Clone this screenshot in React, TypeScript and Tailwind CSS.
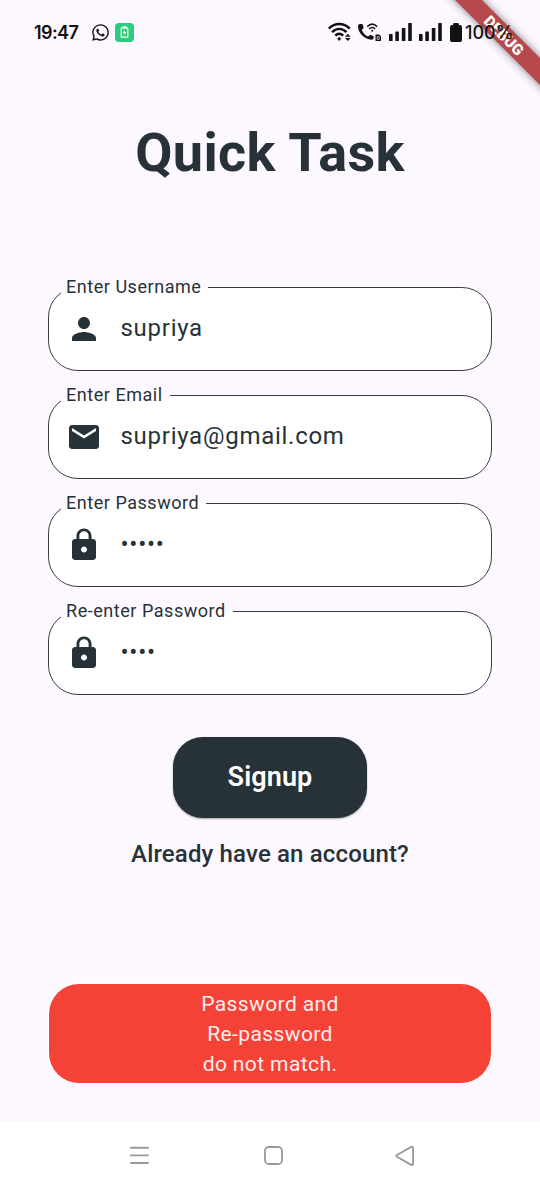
import type { IconType } from "react-icons";
import { FaWhatsapp } from "react-icons/fa";
import { MdEmail, MdLock, MdPerson } from "react-icons/md";

function Signal() {
  return (
    <svg width="23" height="18" viewBox="0 0 23 18" fill="#111">
      <rect x="0" y="11" width="3.6" height="7" rx="0.6" />
      <rect x="6.3" y="8.5" width="3.6" height="9.5" rx="0.6" />
      <rect x="12.8" y="5" width="3.6" height="13" rx="0.6" />
      <rect x="19.2" y="0" width="3.6" height="18" rx="0.6" />
    </svg>
  );
}

function StatusBar() {
  return (
    <header className="relative z-20 flex h-16 items-center pl-[34px] text-[#111]">
      <span className="mt-[2px] w-[58px] font-['Inter'] text-[18px] leading-6 font-semibold tracking-[-0.6px]">19:47</span>
      <FaWhatsapp size={19} className="-ml-px" />
      <svg className="ml-[5px]" width="19" height="19" viewBox="0 0 19 19">
        <rect width="19" height="19" rx="4" fill="#2dcb7c" />
        <path d="M7.8 4.6V3.8h3.4v.8M6.2 5.2h6.6v9H6.2z" fill="none" stroke="#effff5" strokeWidth="1.2" strokeLinejoin="round" />
        <path d="M9.9 6.7 7.6 10h1.7v2.5L11.5 9H9.9z" fill="#effff5" />
      </svg>
      <div className="ml-[194px] flex items-center">
        <svg width="24" height="20" viewBox="0 0 24 20" fill="none" stroke="#111" strokeWidth="2.5">
          <path d="M.8 6.6C7 .5 15.5.5 21.7 6.6" />
          <path d="M4 10.2c4.5-4.4 10-4.4 14.5 0" />
          <path d="M7.3 13.7c2.5-2.5 5.4-2.5 7.9 0" />
          <path d="m11.2 14.7 2 2.1-2 2.1-2-2.1z" fill="#111" stroke="none" />
          <path d="m19.8 11.7 2.8 3H17zM17 16h5.6l-2.8 3z" fill="#111" stroke="none" />
        </svg>
        <svg className="ml-[5px]" width="25" height="18" viewBox="0 0 25 18" fill="none" stroke="#111">
          <path
            d="M1.1 2.1C.2 9.6 7.6 17.2 15.5 16.6c.8-.1 1.5-1.9 1.3-3.2l-3.5-1.7-2.3 1.8C7.8 12 5.8 9.8 4.7 6.8l2.1-1.7L5.6 1.3C4.1.7 2 .9 1.1 2.1z"
            fill="#111"
            stroke="none"
          />
          <path d="M10.3 3.6c3-3 6.8-3 9.8 0M12.2 6c2-1.9 4-1.9 6 0" strokeWidth="1.5" />
          <circle cx="15.2" cy="7.8" r="1" fill="#111" stroke="none" />
          <path d="M18.5 11.5h3.6l1.9 1.8V18h-5.5z" fill="#111" stroke="none" />
          <path d="M20.2 13.6h2v2.8h-2z" stroke="#eee" strokeWidth=".7" />
        </svg>
        <span className="ml-[7px]"><Signal /></span>
        <span className="ml-[7px]"><Signal /></span>
        <svg className="ml-2" width="12" height="19" viewBox="0 0 13 20" preserveAspectRatio="none" fill="#111">
          <rect x="3.5" width="6" height="5" rx="1.2" />
          <rect y="2" width="13" height="18" rx="2.2" />
        </svg>
        <span className="mt-[2px] ml-[3px] font-['Inter'] text-[18px] leading-6 font-medium">100%</span>
      </div>
    </header>
  );
}

function DebugRibbon() {
  return (
    <div className="absolute top-0 right-0 z-10 h-[110px] w-[110px] overflow-hidden">
      <div className="absolute top-[26px] left-[-6px] flex h-[19px] w-[160px] rotate-45 items-center justify-center bg-[#b7484b] font-['Roboto'] text-[15.3px] leading-[18px] font-black text-white shadow-[0_0_9px_rgba(0,0,0,0.5)]">
        DEBUG
      </div>
    </div>
  );
}

interface FieldProps {
  label: string;
  value: string;
  Icon: IconType;
}

function Field({ label, value, Icon }: FieldProps) {
  return (
    <fieldset className="h-[95.5px] rounded-[30px] border border-[#3f3941] bg-white pl-3">
      <legend className="h-6 pr-[7px] pl-[5px] text-[18px] leading-6 tracking-[0.54px] whitespace-nowrap">{label}</legend>
      <div className="flex items-center pt-[11px] pl-[5px]">
        <Icon size={36} className="relative top-[0.5px]" />
        <span className="-mt-[1px] ml-[18.5px] text-[24px] leading-9 tracking-[0.73px]">{value}</span>
      </div>
    </fieldset>
  );
}

const fields: FieldProps[] = [
  { label: "Enter Username", value: "supriya", Icon: MdPerson },
  { label: "Enter Email", value: "supriya@gmail.com", Icon: MdEmail },
  { label: "Enter Password", value: "•••••", Icon: MdLock },
  { label: "Re-enter Password", value: "••••", Icon: MdLock },
];

export default function App() {
  return (
    <div className="relative flex h-[1188px] w-[540px] flex-col overflow-hidden bg-[#fdf7ff] font-['Roboto',sans-serif] text-[#263238]">
      <StatusBar />
      <DebugRibbon />
      <main className="flex h-[1058px] flex-col items-center">
        <h1 className="mt-[57px] text-[54px] leading-[64px] font-bold tracking-[0.4px]">Quick Task</h1>
        <form className="mt-[90px] flex w-[444px] flex-col gap-[12.5px]">
          {fields.map((field) => (
            <Field key={field.label} {...field} />
          ))}
        </form>
        <button className="mt-[42px] h-[81px] w-[194px] shrink-0 rounded-[30px] bg-[#263238] text-[27px] font-semibold tracking-[0.1px] text-white shadow-[0_1px_2px_rgba(0,0,0,0.35)]">
          Signup
        </button>
        <a className="mt-[20px] text-[24px] leading-8 font-medium tracking-[0.15px]">Already have an account?</a>
        <div className="mt-[114.5px] flex h-[99px] w-[442px] shrink-0 items-center justify-center rounded-[30px] bg-[#f44336] text-center text-[21px] leading-[30px] tracking-[0.4px] text-[#fdeeee] ring-1 ring-white">
          <p>
            Password and
            <br />
            Re-password
            <br />
            do not match.
          </p>
        </div>
      </main>
      <nav className="flex h-[66px] shrink-0 items-center bg-white pt-px pl-[130px]">
        <svg width="19" height="19" viewBox="0 0 19 19" stroke="#999" strokeWidth="1.9" strokeLinecap="round">
          <path d="M1 1.8h17M1 9.4h17M1 17h17" />
        </svg>
        <svg className="ml-[115px]" width="19" height="19" viewBox="0 0 19 19" fill="none" stroke="#999" strokeWidth="1.8">
          <rect x="1" y="1" width="17" height="17" rx="3.8" />
        </svg>
        <svg className="ml-[112px]" width="20" height="20" viewBox="0 0 20 20" fill="none" stroke="#999" strokeWidth="1.8" strokeLinejoin="round">
          <path d="M1.9 9c-.8.6-.8 1.3 0 1.8l14.4 8.1c1 .5 1.8.1 1.8-1V1.9c0-1.1-.8-1.5-1.8-1z" />
        </svg>
      </nav>
    </div>
  );
}
